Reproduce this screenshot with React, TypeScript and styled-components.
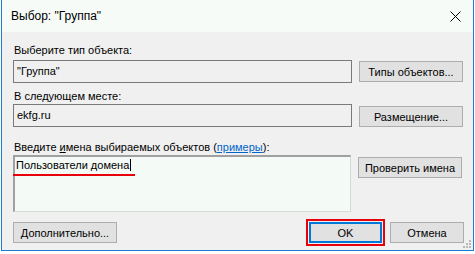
import React from 'react';
import styled, { createGlobalStyle } from 'styled-components';

const GlobalStyle = createGlobalStyle`
  html, body {
    margin: 0;
    padding: 0;
    background: #ffffff;
  }
  body {
    font-family: 'Liberation Sans', Arial, sans-serif;
    font-size: 11px;
    color: #000;
  }
`;

const Frame = styled.div`
  margin-left: 1px;
  width: 471px;
  height: 250px;
  border: 1px solid #1a7fd4;
  border-top: none;
  background: #f0f0f0;
  display: flex;
  flex-direction: column;
  position: relative;
`;

const TitleBar = styled.div`
  height: 32px;
  background: #f6fbf8;
  display: flex;
  align-items: center;
  justify-content: space-between;
  padding: 0 10px 0 9px;
  font-size: 12px;
`;

const CloseIcon = styled.svg`
  width: 11px;
  height: 11px;
  margin-right: 2px;
`;

const Body = styled.div`
  flex: 1;
  padding: 10px 9px 0 11px;
  display: flex;
  flex-direction: column;
`;

const Label = styled.div<{ after?: number }>`
  height: 16px;
  line-height: 16px;
  padding-left: 1px;
  margin-bottom: ${({ after }) => after ?? 0}px;
`;

const Row = styled.div<{ gap?: number }>`
  display: flex;
  align-items: flex-start;
  gap: 7px;
  margin-bottom: ${({ gap }) => gap ?? 0}px;
`;

const Field = styled.div`
  width: 339px;
  height: 23px;
  box-sizing: border-box;
  border: 1px solid #7a7a7a;
  background: #f0f0f0;
  line-height: 20px;
  padding-left: 3px;
`;

const Names = styled.div`
  width: 338px;
  height: 57px;
  box-sizing: border-box;
  border: 1px solid #d6dbd8;
  border-top: 2px solid #a0a0a0;
  border-left: 2px solid #a0a0a0;
  background: #f4faf6;
  padding: 1px 0 0 1px;
  position: relative;
`;

const Typed = styled.span`
  border-right: 1px solid #000;
  padding-right: 1px;
  line-height: 15px;
`;

const Underline = styled.div`
  position: absolute;
  left: -2px;
  top: 17px;
  width: 122px;
  height: 2px;
  background: #e8000b;
`;

const Button = styled.button<{ w: number; top?: number }>`
  width: ${({ w }) => w}px;
  height: 21px;
  margin-top: ${({ top }) => top ?? 1}px;
  border: 1px solid #adadad;
  background: #e1e1e1;
  font-family: 'Liberation Sans', Arial, sans-serif;
  font-size: 11px;
  color: #000;
  padding: 0;
`;

const Footer = styled.div`
  margin-top: auto;
  margin-bottom: 4px;
  display: flex;
  align-items: center;
`;

const Spacer = styled.div`
  flex: 1;
`;

const Highlight = styled.div`
  border: 2px solid #e8000b;
  padding: 1px;
  margin-right: 5px;
`;

const DefaultButton = styled(Button)`
  border: 2px solid #0078d7;
  display: block;
`;

const Link = styled.span`
  color: #0066cc;
  text-decoration: underline;
`;

const U = styled.span`
  text-decoration: underline;
`;

const Grip = styled.svg`
  position: absolute;
  right: 1px;
  bottom: 1px;
  width: 11px;
  height: 11px;
`;

export default function App() {
  return (
    <>
      <GlobalStyle />
      <Frame>
        <TitleBar>
          <span>Выбор: "Группа"</span>
          <CloseIcon viewBox="0 0 11 11">
            <path d="M0.5 0.5 L10.5 10.5 M10.5 0.5 L0.5 10.5" stroke="#000" strokeWidth="1" fill="none" />
          </CloseIcon>
        </TitleBar>
        <Body>
          <Label after={2}>Выберите тип объекта:</Label>
          <Row gap={5}>
            <Field>"Группа"</Field>
            <Button w={104}>Типы объектов...</Button>
          </Row>
          <Label>В следующем месте:</Label>
          <Row gap={12}>
            <Field>ekfg.ru</Field>
            <Button w={104} top={2}>Размещение...</Button>
          </Row>
          <Label>
            Введите <U>и</U>мена выбираемых объектов (<Link>примеры</Link>):
          </Label>
          <Row>
            <Names>
              <Typed>Пользователи домена</Typed>
              <Underline />
            </Names>
            <Button w={104} top={2}>Проверить имена</Button>
          </Row>
          <Footer>
            <Button w={104} top={0}>Дополнительно...</Button>
            <Spacer />
            <Highlight>
              <DefaultButton w={73} top={0}>OK</DefaultButton>
            </Highlight>
            <Button w={74} top={0}>Отмена</Button>
          </Footer>
        </Body>
        <Grip viewBox="0 0 11 11">
          {[[8, 0], [8, 3], [5, 3], [8, 6], [5, 6], [2, 6]].map(([x, y], i) => (
            <rect key={i} x={x} y={y + 2} width="2" height="2" fill="#b8b8b8" />
          ))}
        </Grip>
      </Frame>
    </>
  );
}
